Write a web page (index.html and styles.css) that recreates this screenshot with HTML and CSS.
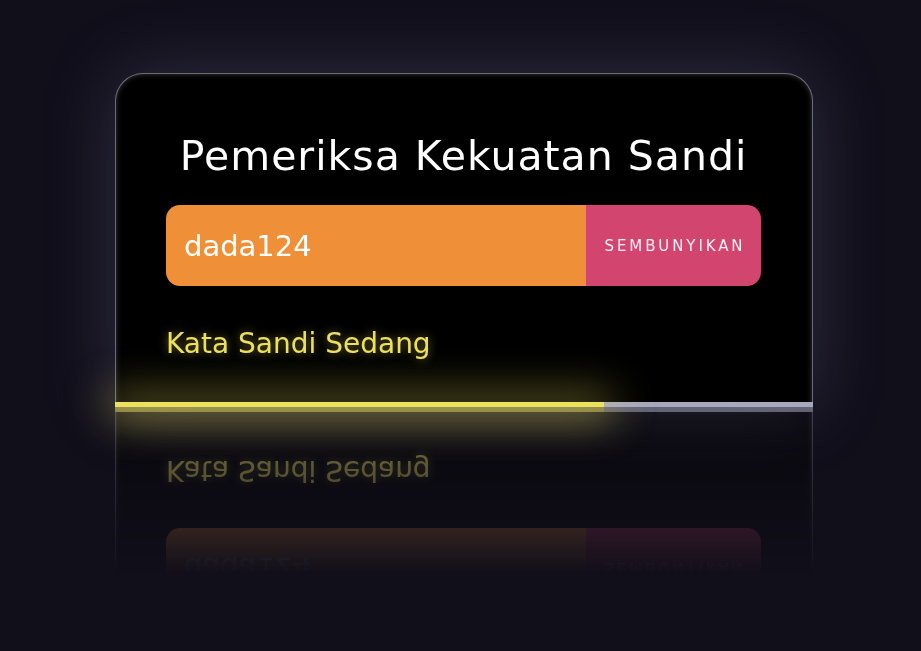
FILE: index.html
```html
<!DOCTYPE html>
<html lang="id">
<head>
<meta charset="utf-8">
<title>Pemeriksa Kekuatan Sandi</title>
<link rel="stylesheet" href="styles.css">
</head>
<body>
<main class="stage">
  <section class="card">
    <h1 class="title">Pemeriksa Kekuatan Sandi</h1>
    <div class="field">
      <input class="field-input" type="text" value="dada124">
      <button class="field-btn" type="button">SEMBUNYIKAN</button>
    </div>
    <p class="strength">Kata Sandi Sedang</p>
    <div class="meter"><div class="meter-fill" style="width:70%"></div></div>
  </section>
</main>
</body>
</html>
```

FILE: styles.css
```css
* { box-sizing: border-box; }
html, body { margin: 0; height: 100%; }
body {
  background: #110f1a;
  font-family: "DejaVu Sans", "Open Sans", sans-serif;
  overflow: hidden;
}
.stage {
  padding-top: 73px;
  padding-left: 115px;
}
.card {
  width: 698px;
  background: #000;
  border-radius: 28px 28px 0 0;
  padding: 59px 52px 0 51px;
  box-shadow:
    0 0 70px rgba(120, 120, 160, 0.3),
    inset 0 0 0 1px rgba(200, 200, 215, 0.45),
    inset 0 0 6px rgba(255, 255, 255, 0.3);
  -webkit-box-reflect: below 0 linear-gradient(transparent 50%, rgba(255, 255, 255, 0.55));
}
.title {
  margin: 0;
  color: #fff;
  font-size: 41px;
  font-weight: 400;
  line-height: 48px;
  letter-spacing: 1px;
  text-align: center;
}
.field {
  display: flex;
  margin-top: 25px;
  height: 81px;
  border-radius: 14px;
  overflow: hidden;
}
.field-input {
  flex: 1;
  min-width: 0;
  border: 0;
  outline: 0;
  background: #ef9038;
  color: #fff;
  font-family: inherit;
  font-size: 29px;
  padding: 0 18px;
}
.field-btn {
  width: 175px;
  border: 0;
  background: #d1456f;
  color: #fdf0f4;
  font-family: inherit;
  font-size: 15px;
  letter-spacing: 2.9px;
  padding: 0 0 0 3px;
}
.strength {
  margin: 41px 0 41px;
  color: #ece05c;
  font-size: 28px;
  line-height: 34px;
  text-shadow: 0 0 10px rgba(236, 224, 92, 0.5);
}
.meter {
  margin: 0 -52px 0 -51px;
  height: 5px;
  background: #a7a8be;
}
.meter-fill {
  height: 100%;
  background: #ece05c;
  box-shadow: 0 0 40px 8px rgba(236, 224, 92, 0.5);
}
```
